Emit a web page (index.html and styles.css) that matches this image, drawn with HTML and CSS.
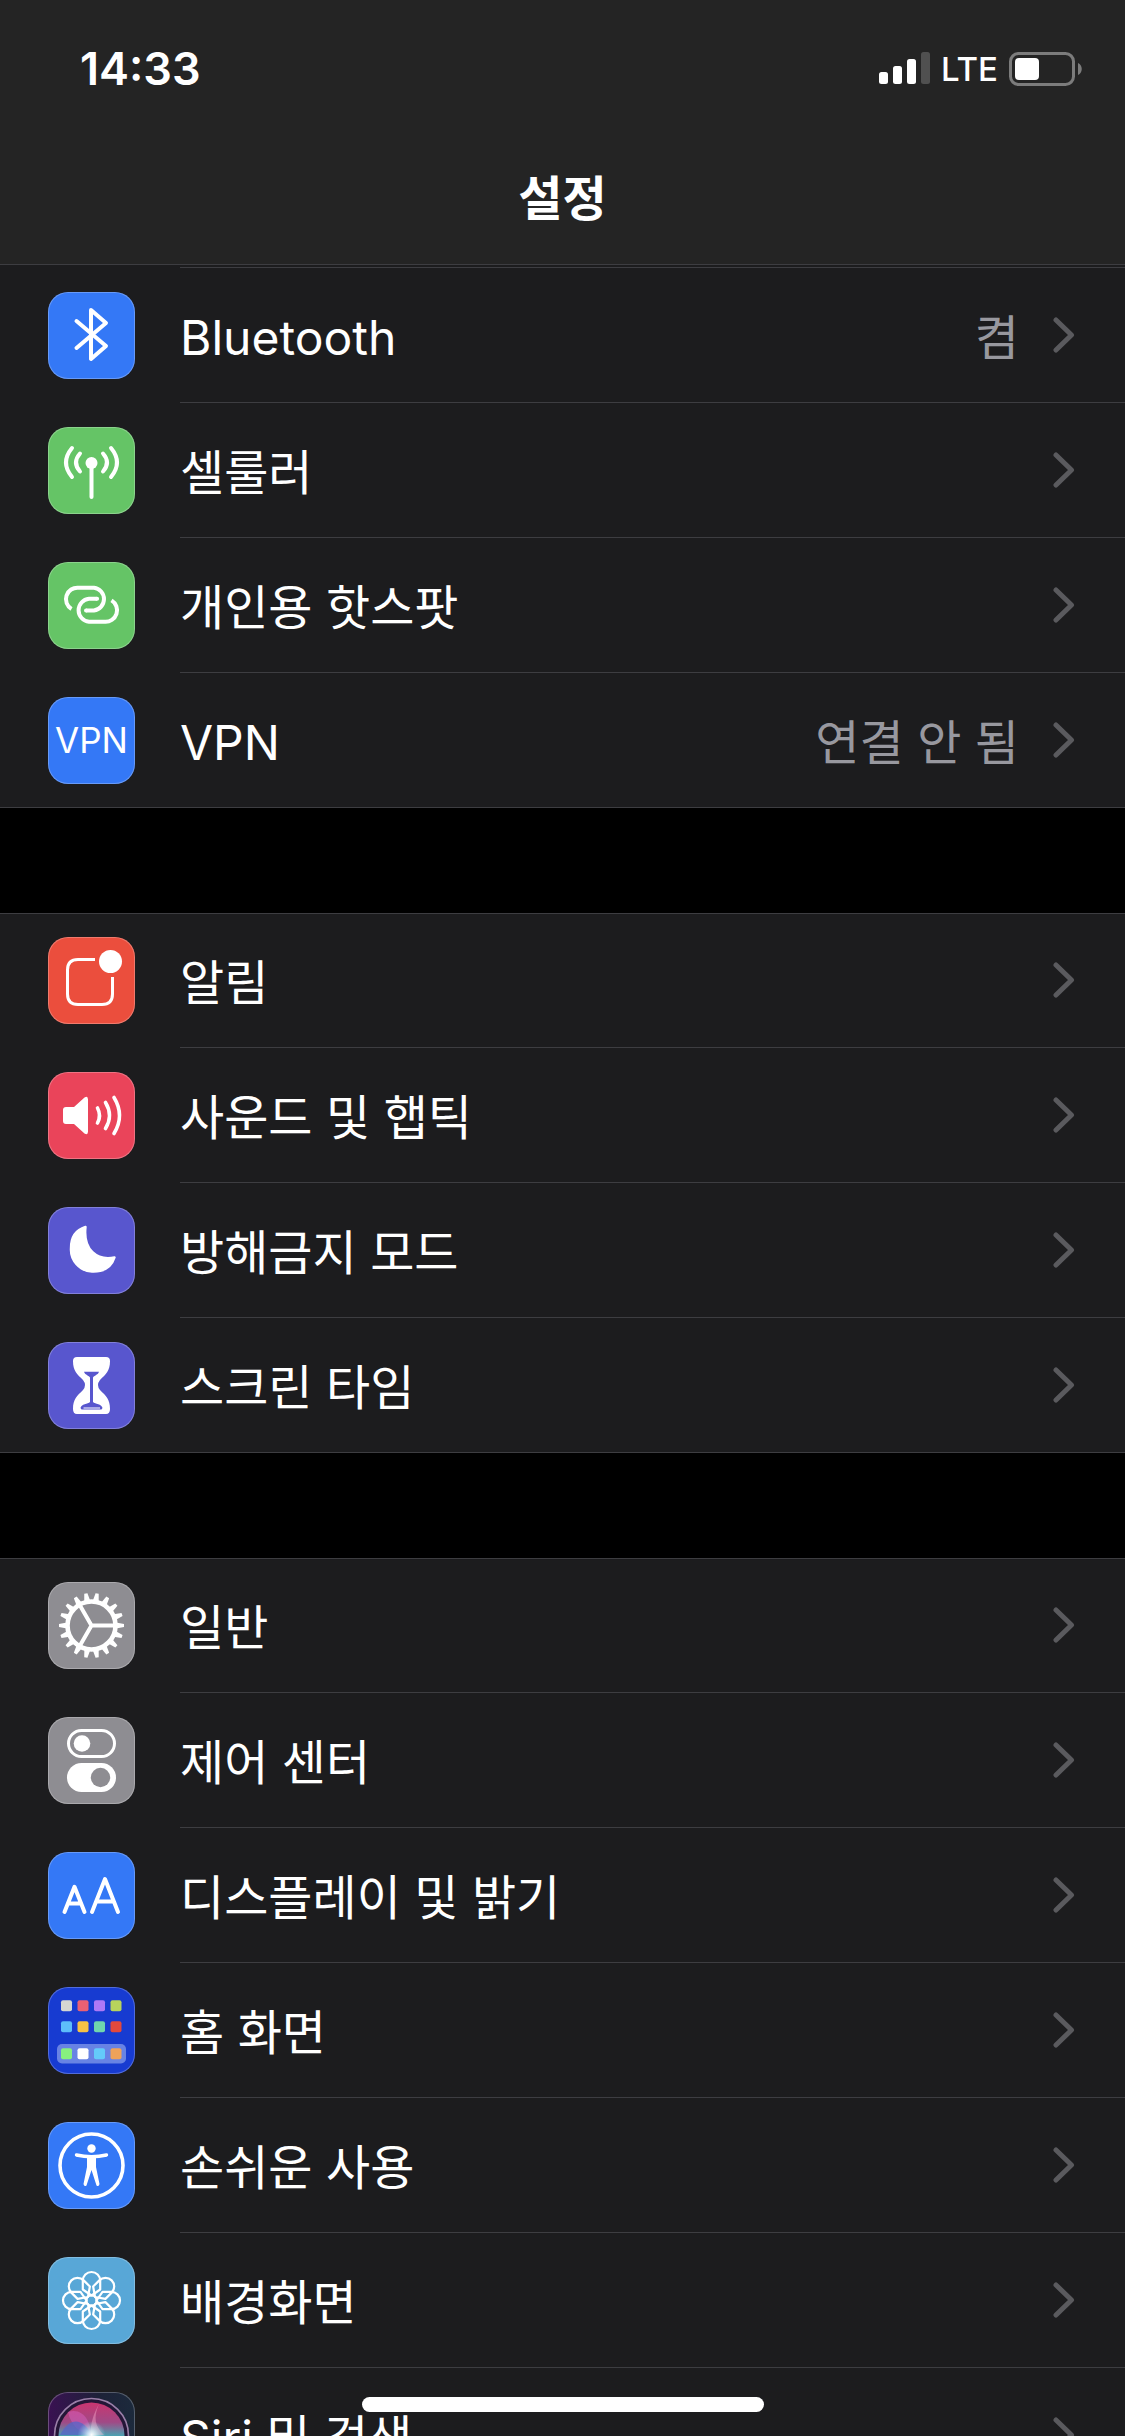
FILE: index.html
```html
<!DOCTYPE html>
<html lang="ko">
<head>
<meta charset="utf-8">
<meta name="viewport" content="width=device-width, initial-scale=1">
<title>설정</title>
<link rel="stylesheet" href="styles.css">
</head>
<body>
<svg class="defs" aria-hidden="true">
  <symbol id="chevron" viewBox="0 0 22 37"><path d="M3 3 18.500 18 3 33" fill="none" stroke="currentColor" stroke-width="5" stroke-linecap="round" stroke-linejoin="round"/></symbol>
  <path id="tooth" d="M68 40.500 76 41.900V45.100L68 46.500Z"/>
  <path id="petal" d="M43.500 38.500 34.800 32.500V23.700A8.700 8.700 0 0 1 52.200 23.700V32.500Z"/>
</svg>

<header class="top-bar">
  <div class="status">
    <time class="clock">14:33</time>
    <div class="indicators">
      <svg class="signal" viewBox="0 0 52 34" aria-hidden="true"><g fill="#fff"><rect y="20" width="9" height="12" rx="2.500"/><rect x="14" y="14" width="9" height="18" rx="2.500"/><rect x="28" y="7" width="9" height="25" rx="2.500"/></g><rect x="42" y="0" width="9" height="32" rx="2.500" fill="#505050"/></svg>
      <span class="network">LTE</span>
      <svg class="battery" viewBox="0 0 74 34" aria-hidden="true"><rect x="2.500" y="1.500" width="63" height="31" rx="8" fill="none" stroke="#7c7c7c" stroke-width="3"/><rect x="7" y="6" width="24" height="22" rx="4" fill="#fff"/><path d="M70 11C75 13 75 21 70 23Z" fill="#7c7c7c"/></svg>
    </div>
  </div>
  <h1 class="title">설정</h1>
</header>

<main class="settings">
  <ul class="group continued">
    <li><a class="row" href="#bluetooth">
      <svg class="icon blue" viewBox="0 0 87 87" aria-hidden="true"><path d="M28.500 29 58 54 43 67V18L58 31 28.500 56" fill="none" stroke="#fff" stroke-width="4" stroke-linecap="round" stroke-linejoin="round"/></svg>
      <span class="label">Bluetooth</span><span class="value">켬</span><svg class="chevron" aria-hidden="true"><use href="#chevron"/></svg></a></li>
    <li><a class="row" href="#cellular">
      <svg class="icon green" viewBox="0 0 87 87" aria-hidden="true"><circle cx="43.500" cy="36" r="6" fill="#fff"/><g fill="none" stroke="#fff" stroke-width="4" stroke-linecap="round"><path d="M43.500 36V70"/><path d="M32 26.500Q24 35.500 32 44.500M55 26.500Q63 35.500 55 44.500M24 21Q12 35.500 24 50M63 21Q75 35.500 63 50"/></g></svg>
      <span class="label">셀룰러</span><svg class="chevron" aria-hidden="true"><use href="#chevron"/></svg></a></li>
    <li><a class="row" href="#hotspot">
      <svg class="icon green" viewBox="0 0 87 87" aria-hidden="true"><g fill="none" stroke="#fff" stroke-width="4"><path d="M23.500 47A11.500 11.500 0 0 1 30.500 25.700H46A11.500 11.500 0 0 1 46 48.500H38" /><path d="M63.500 38.400A11.500 11.500 0 0 1 56.500 59.700H41A11.500 11.500 0 0 1 41 36.800H49"/><path d="M38 48.500h.1M49 36.800h.1" stroke-linecap="round"/></g></svg>
      <span class="label">개인용 핫스팟</span><svg class="chevron" aria-hidden="true"><use href="#chevron"/></svg></a></li>
    <li><a class="row" href="#vpn">
      <span class="icon blue vpn" aria-hidden="true">VPN</span>
      <span class="label">VPN</span><span class="value">연결 안 됨</span><svg class="chevron" aria-hidden="true"><use href="#chevron"/></svg></a></li>
  </ul>

  <ul class="group">
    <li><a class="row" href="#notifications">
      <svg class="icon red" viewBox="0 0 87 87" aria-hidden="true"><path d="M47 22.500H30Q19.500 22.500 19.500 33V57Q19.500 67.500 30 67.500H54Q64.500 67.500 64.500 57V40" fill="none" stroke="#fff" stroke-width="3"/><circle cx="62.500" cy="24.500" r="11.500" fill="#fff"/></svg>
      <span class="label">알림</span><svg class="chevron" aria-hidden="true"><use href="#chevron"/></svg></a></li>
    <li><a class="row" href="#sounds">
      <svg class="icon pink" viewBox="0 0 87 87" aria-hidden="true"><path d="M18 35H26L36.500 25.500Q40 23.500 40 27.500V59.500Q40 63.500 36.500 61.500L26 52H18Q15 52 15 49V38Q15 35 18 35Z" fill="#fff"/><path d="M49.500 36Q53.500 43.500 49.500 51M57.500 30.500Q65.500 43.500 57.500 56.500M66 25.500Q77 43.500 66 61.500" fill="none" stroke="#fff" stroke-width="3.600" stroke-linecap="round"/></svg>
      <span class="label">사운드 및 햅틱</span><svg class="chevron" aria-hidden="true"><use href="#chevron"/></svg></a></li>
    <li><a class="row" href="#do-not-disturb">
      <svg class="icon indigo" viewBox="0 0 87 87" aria-hidden="true"><path d="M37.500 20C28 23 23 30 23 41A22 22 0 0 0 44 64.500C56 65 63.500 60 66.500 50.500C49 54 35 43 37.500 20Z" fill="#fff" stroke="#fff" stroke-width="2.400" stroke-linejoin="round"/></svg>
      <span class="label">방해금지 모드</span><svg class="chevron" aria-hidden="true"><use href="#chevron"/></svg></a></li>
    <li><a class="row" href="#screen-time">
      <svg class="icon indigo" viewBox="0 0 87 87" aria-hidden="true"><path d="M29 15H58Q62 15 62 19C62 29 58 32 52 38Q48 43 52 48C58 54 62 57 62 67Q62 72 58 72H29Q25 72 25 67C25 57 29 54 35 48Q39 43 35 38C29 32 25 29 25 19Q25 15 29 15Z" fill="#fff"/><path d="M36 29.800H51C50 33 47 33 45 35.500V60C47 62 54 62 54.500 66L53.500 67.500H33.500L32.500 66C33 62 40 62 42 60V35.500C40 33 37 33 36 29.800Z" fill="#5856ce"/><path d="M35.500 66H52" stroke="#fff" stroke-width="1"/></svg>
      <span class="label">스크린 타임</span><svg class="chevron" aria-hidden="true"><use href="#chevron"/></svg></a></li>
  </ul>

  <ul class="group">
    <li><a class="row" href="#general">
      <svg class="icon gray" viewBox="0 0 87 87" aria-hidden="true"><circle cx="43.500" cy="43.500" r="24" fill="none" stroke="#fff" stroke-width="4.600"/><path d="M67 43.500H43.500L32 23.500M43.500 43.500 32 63.500" fill="none" stroke="#fff" stroke-width="4"/><g fill="#fff"><use href="#tooth"/><use href="#tooth" transform="rotate(20 43.500 43.500)"/><use href="#tooth" transform="rotate(40 43.500 43.500)"/><use href="#tooth" transform="rotate(60 43.500 43.500)"/><use href="#tooth" transform="rotate(80 43.500 43.500)"/><use href="#tooth" transform="rotate(100 43.500 43.500)"/><use href="#tooth" transform="rotate(120 43.500 43.500)"/><use href="#tooth" transform="rotate(140 43.500 43.500)"/><use href="#tooth" transform="rotate(160 43.500 43.500)"/><use href="#tooth" transform="rotate(180 43.500 43.500)"/><use href="#tooth" transform="rotate(200 43.500 43.500)"/><use href="#tooth" transform="rotate(220 43.500 43.500)"/><use href="#tooth" transform="rotate(240 43.500 43.500)"/><use href="#tooth" transform="rotate(260 43.500 43.500)"/><use href="#tooth" transform="rotate(280 43.500 43.500)"/><use href="#tooth" transform="rotate(300 43.500 43.500)"/><use href="#tooth" transform="rotate(320 43.500 43.500)"/><use href="#tooth" transform="rotate(340 43.500 43.500)"/></g></svg>
      <span class="label">일반</span><svg class="chevron" aria-hidden="true"><use href="#chevron"/></svg></a></li>
    <li><a class="row" href="#control-center">
      <svg class="icon gray" viewBox="0 0 87 87" aria-hidden="true"><rect x="20.500" y="13.500" width="46" height="26" rx="13" fill="none" stroke="#fff" stroke-width="3"/><circle cx="34" cy="26.500" r="8.300" fill="#fff"/><rect x="19" y="46" width="49" height="29" rx="14.500" fill="#fff"/><circle cx="52.500" cy="60.500" r="9.700" fill="#8e8d92"/></svg>
      <span class="label">제어 센터</span><svg class="chevron" aria-hidden="true"><use href="#chevron"/></svg></a></li>
    <li><a class="row" href="#display">
      <svg class="icon blue" viewBox="0 0 87 87" aria-hidden="true"><g fill="none" stroke="#fff" stroke-width="4" stroke-linecap="round" stroke-linejoin="round"><path d="M16.500 60 26.500 34.800 36.500 60M20.500 51.500H32.500"/><path d="M44 60 57 27 70 60M49 49.500H65"/></g></svg>
      <span class="label">디스플레이 및 밝기</span><svg class="chevron" aria-hidden="true"><use href="#chevron"/></svg></a></li>
    <li><a class="row" href="#home-screen">
      <svg class="icon navy" viewBox="0 0 87 87" aria-hidden="true"><rect x="9" y="57" width="69" height="19.500" rx="5" fill="#6883e4"/><rect x="13" y="13.300" width="11" height="11" rx="2" fill="#d5d6d2"/><rect x="29.500" y="13.300" width="11" height="11" rx="2" fill="#eb6073"/><rect x="46" y="13.300" width="11" height="11" rx="2" fill="#ae78f6"/><rect x="62.500" y="13.300" width="11" height="11" rx="2" fill="#b8d45c"/><rect x="13" y="34.300" width="11" height="11" rx="2" fill="#5dbdfa"/><rect x="29.500" y="34.300" width="11" height="11" rx="2" fill="#f7c244"/><rect x="46" y="34.300" width="11" height="11" rx="2" fill="#70d6ad"/><rect x="62.500" y="34.300" width="11" height="11" rx="2" fill="#e3493d"/><rect x="13" y="61.300" width="11" height="11" rx="2" fill="#87f07f"/><rect x="29.500" y="61.300" width="11" height="11" rx="2" fill="#fff"/><rect x="46" y="61.300" width="11" height="11" rx="2" fill="#64cbfa"/><rect x="62.500" y="61.300" width="11" height="11" rx="2" fill="#eea25a"/></svg>
      <span class="label">홈 화면</span><svg class="chevron" aria-hidden="true"><use href="#chevron"/></svg></a></li>
    <li><a class="row" href="#accessibility">
      <svg class="icon blue" viewBox="0 0 87 87" aria-hidden="true"><circle cx="43.500" cy="43.500" r="31.500" fill="none" stroke="#fff" stroke-width="3.600"/><circle cx="43.500" cy="26.500" r="4.200" fill="#fff"/><path d="M28.500 33Q43.500 36.500 58.500 33" fill="none" stroke="#fff" stroke-width="3.400" stroke-linecap="round"/><path d="M39 34H48V45L51.500 62Q51 65 48.500 63.500L43.500 48 38.500 63.500Q36 65 35.500 62L39 45Z" fill="#fff"/></svg>
      <span class="label">손쉬운 사용</span><svg class="chevron" aria-hidden="true"><use href="#chevron"/></svg></a></li>
    <li><a class="row" href="#wallpaper">
      <svg class="icon sky" viewBox="0 0 87 87" aria-hidden="true"><g fill="none" stroke="#fff" stroke-width="2.200" stroke-linejoin="round"><use href="#petal"/><use href="#petal" transform="rotate(45 43.500 43.500)"/><use href="#petal" transform="rotate(90 43.500 43.500)"/><use href="#petal" transform="rotate(135 43.500 43.500)"/><use href="#petal" transform="rotate(180 43.500 43.500)"/><use href="#petal" transform="rotate(225 43.500 43.500)"/><use href="#petal" transform="rotate(270 43.500 43.500)"/><use href="#petal" transform="rotate(315 43.500 43.500)"/><circle cx="43.500" cy="43.500" r="5"/></g></svg>
      <span class="label">배경화면</span><svg class="chevron" aria-hidden="true"><use href="#chevron"/></svg></a></li>
    <li><a class="row" href="#siri">
      <svg class="icon siri" viewBox="0 0 87 87" aria-hidden="true">
        <defs>
          <linearGradient id="orb" x1="0" y1="0" x2="0" y2="1"><stop offset="0" stop-color="#c93570"/><stop offset=".3" stop-color="#a04a86"/><stop offset=".5" stop-color="#4d9fb0"/><stop offset="1" stop-color="#1b3d78"/></linearGradient>
          <radialGradient id="glow"><stop offset="0" stop-color="#fff"/><stop offset=".3" stop-color="#d6f4f8" stop-opacity=".8"/><stop offset="1" stop-color="#8ce0e8" stop-opacity="0"/></radialGradient>
        </defs>
        <circle cx="43.500" cy="43.500" r="37" fill="#241637" stroke="#9a7fa8" stroke-width="1.600"/>
        <circle cx="43.500" cy="43.500" r="33" fill="url(#orb)"/>
        <path d="M20 20C35 15 43 30 43 43C33 42 23 34 20 20Z" fill="#d85fc0" opacity=".5"/>
        <path d="M12 43C22 24 35 26 44 43Z" fill="#5566c8" opacity=".75"/>
        <path d="M51 12C45 26 47 34 56 43H43C42 31 46 21 51 12Z" fill="#ef9cc2" opacity=".5"/>
        <circle cx="43.500" cy="43" r="14" fill="url(#glow)"/>
      </svg>
      <span class="label">Siri 및 검색</span><svg class="chevron" aria-hidden="true"><use href="#chevron"/></svg></a></li>
  </ul>
</main>
<div class="home-indicator"></div>
</body>
</html>
```
FILE: styles.css
```css
* { box-sizing: border-box; }

body {
  margin: 0;
  height: 100vh;
  overflow: hidden;
  display: flex;
  flex-direction: column;
  background: #000;
  color: #fff;
  font-family: Inter, "Noto Sans CJK KR", sans-serif;
  font-size: 48px;
  line-height: 60px;
}

.defs { position: absolute; width: 0; height: 0; }

.top-bar {
  flex: none;
  background: #242424;
  border-bottom: 1px solid #3d3d41;
}

.status {
  display: flex;
  justify-content: space-between;
  align-items: center;
  height: 138px;
  padding: 0 43px 0 80px;
}

.clock { font-size: 45px; font-weight: 600; }

.indicators { display: flex; align-items: center; gap: 10px; }
.signal { width: 52px; height: 34px; }
.network { font-size: 33px; font-weight: 500; line-height: 40px; }
.battery { width: 74px; height: 34px; }

.title {
  margin: 0;
  padding: 31px 0 35px;
  font-size: 48px;
  font-weight: 600;
  line-height: 60px;
  text-align: center;
}

.settings {
  flex: 1;
  min-height: 0;
  overflow: hidden;
  display: flex;
  flex-direction: column;
  gap: 105px;
}

.group {
  flex: none;
  margin: 0;
  padding: 0;
  list-style: none;
  background: linear-gradient(#3d3d41, #3d3d41) top / 100% 1px no-repeat #1c1c1e;
}

/* The first group is scrolled part of the way under the top bar. */
.continued {
  padding-top: 3px;
  background: linear-gradient(#3d3d41, #3d3d41) 180px 2px / 100% 1px no-repeat #1c1c1e;
}

.row {
  display: flex;
  align-items: center;
  height: 135px;
  padding: 0 50px 0 48px;
  color: inherit;
  text-decoration: none;
  background: linear-gradient(#3d3d41, #3d3d41) 180px 100% / 100% 1px no-repeat;
}

.group li:last-child .row { background-position: 0 100%; }

.icon {
  flex: none;
  width: 87px;
  height: 87px;
  margin-right: 45px;
  border-radius: 20px;
  box-shadow: inset 0 0 0 1px rgba(255, 255, 255, 0.25);
}

.blue { background-color: #3478f6; }
.green { background-color: #65c466; }
.red { background-color: #eb4e3d; }
.pink { background-color: #ea445a; }
.indigo { background-color: #5856ce; }
.gray { background-color: #8e8d92; }
.navy { background-color: #173bd1; }
.sky { background-color: #58a7d7; }
.siri { background-image: linear-gradient(90deg, #3a1152, #1d2238 60%, #1c2a3c); }

.vpn {
  display: flex;
  align-items: center;
  justify-content: center;
  padding-bottom: 2px;
  font-size: 35px;
}

.label { flex: 1; padding-top: 4px; }
.value { padding-top: 4px; color: #98989f; }

.chevron {
  flex: none;
  width: 22px;
  height: 37px;
  margin-left: 34px;
  color: #5a5a5e;
}

.home-indicator {
  position: fixed;
  bottom: 24px;
  left: 50%;
  width: 402px;
  height: 15px;
  margin-left: -201px;
  border-radius: 8px;
  background: #fff;
}
```
